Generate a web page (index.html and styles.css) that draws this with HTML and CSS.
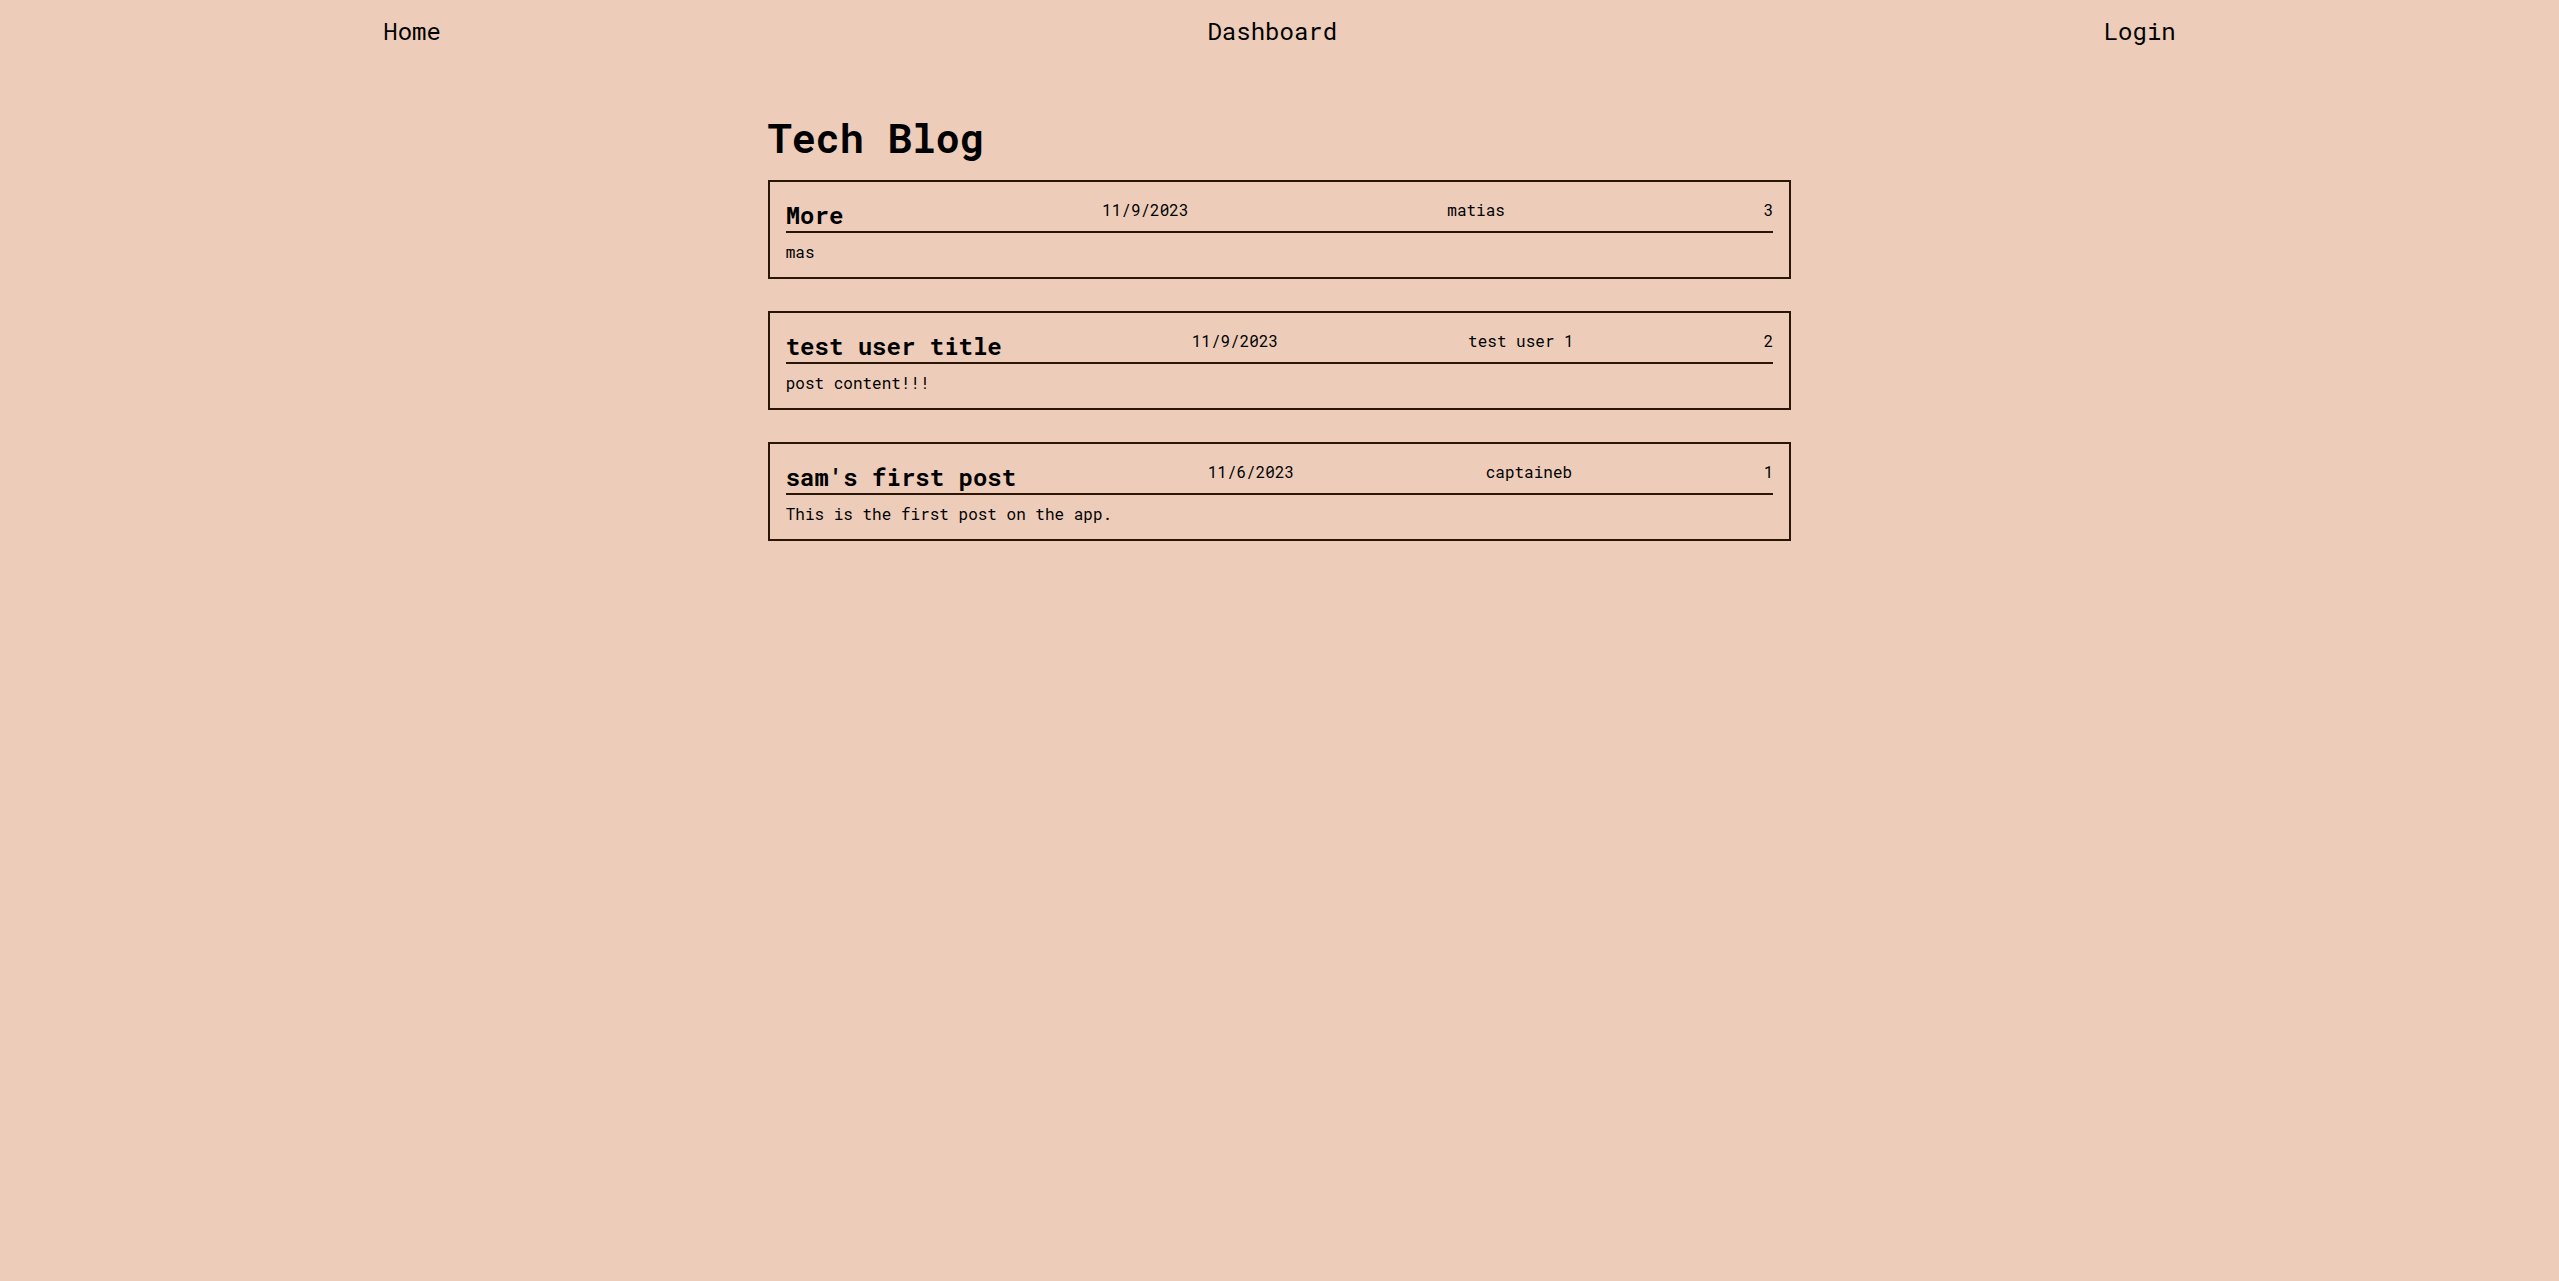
FILE: index.html
```html
<html>
 <head>
  <title>Tech Blog</title>
  <meta name='viewport' content='width=device-width,initial-scale=1.0'>
  <link rel="stylesheet" href="styles.css">
 </head>
 <body>
  <nav class='nav'>
   <a href='/'>Home</a>
   <a href='/dashboard'>Dashboard</a>
   <a href='/login'>Login</a>
  </nav>
  <main class='main'>
   <h1>Tech Blog</h1>
   <div class='post'>
    <div class='post-head'>
     <h2>More</h2>
     <span>11/9/2023</span>
     <span>matias</span>
     <span>3</span>
    </div>
    <p>mas</p>
   </div>
   <div class='post'>
    <div class='post-head'>
     <h2>test user title</h2>
     <span>11/9/2023</span>
     <span>test user 1</span>
     <span>2</span>
    </div>
    <p>post content!!!</p>
   </div>
   <div class='post'>
    <div class='post-head'>
     <h2>sam's first post</h2>
     <span>11/6/2023</span>
     <span>captaineb</span>
     <span>1</span>
    </div>
    <p>This is the first post on the app.</p>
   </div>
  </main>
 </body>
</html>
```

FILE: styles.css
```css
* {font-family:"Roboto Mono", "Liberation Mono", monospace}
body {margin:0; background:#edcdb9; color:#000}
a {color:#000; text-decoration:none}
.nav {display:flex; justify-content:space-around; padding:15px 0 16px; font-size:24px; line-height:32px}
.main {width:40%; margin:0 auto; padding-top:48px}
h1 {font-size:40px; line-height:53px; margin:0 0 16px}
.post {border:2px solid #2a1506; padding:17px 16px 15px; margin:0 0 32px}
.post-head {display:flex; justify-content:space-between; align-items:flex-start; border-bottom:2px solid #2a1506; font-size:16px; line-height:21px}
.post-head h2 {font-size:24px; line-height:32px; margin:0}
.post p {font-size:16px; line-height:21px; margin:8px 0 0}
```
